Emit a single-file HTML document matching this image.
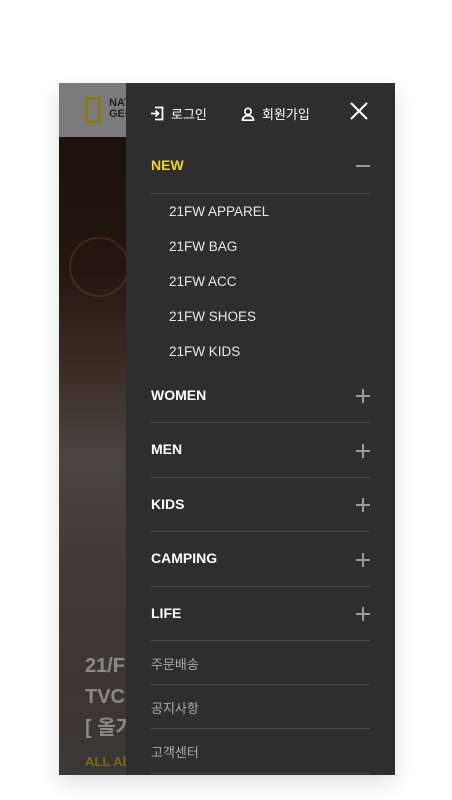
<!DOCTYPE html>
<html><head><meta charset="utf-8"><style>
*{margin:0;padding:0;box-sizing:border-box}
body{width:452px;height:800px;background:#fff;position:relative;overflow:hidden;font-family:"Liberation Sans","Noto Sans CJK KR",sans-serif}
#frame{position:absolute;left:59px;top:83px;width:336px;height:692px;box-shadow:0 8px 20px rgba(0,0,0,.12);overflow:hidden}
#hdr{position:absolute;left:0;top:0;width:336px;height:54px;background:#7b7b7b}
#photo{position:absolute;left:0;top:54px;width:336px;height:638px;background:linear-gradient(180deg,#1e120c 0%,#24160f 20%,#3a2a22 35%,#4a4540 50%,#403a36 70%,#3e3530 85%,#3a3836 100%)}
#panel{position:absolute;left:67px;top:0;width:269px;height:692px;background:#2e2e2e}
.t{position:absolute;white-space:nowrap}
.line{position:absolute;left:25px;width:219px;height:1px;background:#494949}
.cat{left:25px;font-weight:bold;font-size:14px;color:#fff}
.sub{left:43px;font-size:13.5px;color:#e8e8e8}
.misc{left:25px;font-size:13px;color:#aaa}
.plus{position:absolute;left:230px;width:14px;height:14px}
.plus:before{content:"";position:absolute;left:0;top:6px;width:14px;height:2px;background:#9a9a9a}
.plus:after{content:"";position:absolute;left:6px;top:0;width:2px;height:14px;background:#9a9a9a}
</style></head><body>
<div id="frame">
<div id="hdr">
<div style="position:absolute;left:26px;top:14px;width:16px;height:26px;border:3px solid #8a7a10"></div>
<div class="t" style="left:50px;top:15px;font-size:11px;font-weight:bold;color:#222;line-height:11px">NAT<br>GEO</div>
</div>
<div id="photo">
<div style="position:absolute;left:10px;top:100px;width:60px;height:60px;border:2px solid rgba(130,80,70,.3);border-radius:50%"></div>
<div class="t" style="left:26px;top:514px;font-size:20px;font-weight:bold;color:#8a8a8a;line-height:31px">21/F<br>TVC<br>[ 올가</div>
<div class="t" style="left:26px;top:617px;font-size:13px;font-weight:bold;color:#7a6a10">ALL AD</div>
</div>
<div id="panel">
<svg style="position:absolute;left:24px;top:23px" width="14" height="15" viewBox="0 0 14 15" fill="none" stroke="#fff" stroke-width="1.8"><path d="M5 1.5h7.5v12H5M1 7.5h7M5.5 4.5l3 3-3 3"/></svg>
<div class="t" style="left:45px;top:21px;font-size:13px;color:#fff">로그인</div>
<svg style="position:absolute;left:115px;top:24px" width="14" height="14" viewBox="0 0 14 14" fill="none" stroke="#fff" stroke-width="1.7"><circle cx="7" cy="4.5" r="3.2"/><path d="M1.5 13.2c0-3 2.5-4.6 5.5-4.6s5.5 1.6 5.5 4.6z"/></svg>
<div class="t" style="left:136px;top:21px;font-size:13px;color:#fff">회원가입</div>
<svg style="position:absolute;left:224px;top:19px" width="18" height="18" viewBox="0 0 18 18" stroke="#fff" stroke-width="2"><path d="M1 1l16 16M17 1L1 17"/></svg>
<div class="t cat" style="top:74px;color:#f5d31c">NEW</div>
<div style="position:absolute;left:230px;top:82px;width:14px;height:2px;background:#9a9a9a"></div>
<div class="line" style="top:110px"></div>
<div class="t sub" style="top:121px">21FW APPAREL</div>
<div class="t sub" style="top:156px">21FW BAG</div>
<div class="t sub" style="top:191px">21FW ACC</div>
<div class="t sub" style="top:226px">21FW SHOES</div>
<div class="t sub" style="top:261px">21FW KIDS</div>
<div class="t cat" style="top:304px">WOMEN</div><div class="plus" style="top:306px"></div>
<div class="line" style="top:339px"></div>
<div class="t cat" style="top:358px">MEN</div><div class="plus" style="top:361px"></div>
<div class="line" style="top:394px"></div>
<div class="t cat" style="top:413px">KIDS</div><div class="plus" style="top:415px"></div>
<div class="line" style="top:448px"></div>
<div class="t cat" style="top:467px">CAMPING</div><div class="plus" style="top:470px"></div>
<div class="line" style="top:503px"></div>
<div class="t cat" style="top:522px">LIFE</div><div class="plus" style="top:524px"></div>
<div class="line" style="top:557px"></div>
<div class="t misc" style="top:571px">주문배송</div>
<div class="line" style="top:601px"></div>
<div class="t misc" style="top:615px">공지사항</div>
<div class="line" style="top:645px"></div>
<div class="t misc" style="top:659px">고객센터</div>
<div class="line" style="top:690px"></div>
</div>
</div>
</body></html>
